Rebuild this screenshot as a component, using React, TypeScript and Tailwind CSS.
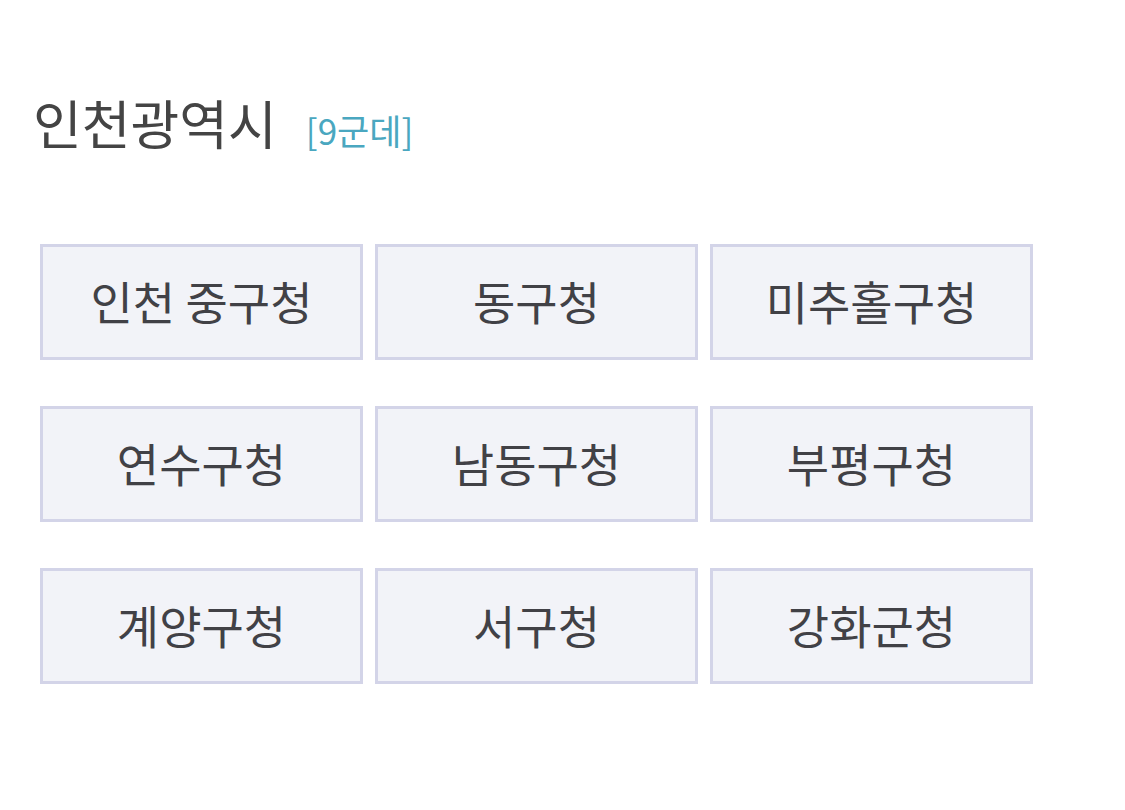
const OFFICES = [
  "인천 중구청",
  "동구청",
  "미추홀구청",
  "연수구청",
  "남동구청",
  "부평구청",
  "계양구청",
  "서구청",
  "강화군청",
];

export default function App() {
  return (
    <div
      className="min-h-[810px] w-[1125px] bg-white"
      style={{ fontFamily: '"Noto Sans CJK KR", "Noto Sans", sans-serif' }}
    >
      <div className="flex items-baseline pl-[33px] pt-[96px]">
        <h1 className="text-[53px] leading-none font-normal text-[#444444]">
          인천광역시
        </h1>
        <span className="ml-[29px] text-[35px] leading-none text-[#4aa7c0]">
          [9군데]
        </span>
      </div>

      <div className="ml-[40px] mt-[95px] grid grid-cols-[323px_323px_323px] gap-x-[12px] gap-y-[46px]">
        {OFFICES.map((name) => (
          <button
            key={name}
            className="flex h-[116px] items-center justify-center border-[3px] border-[#d3d4e8] bg-[#f2f3f8] pb-[4px] text-[46px] text-[#414146]"
          >
            {name}
          </button>
        ))}
      </div>
    </div>
  );
}
